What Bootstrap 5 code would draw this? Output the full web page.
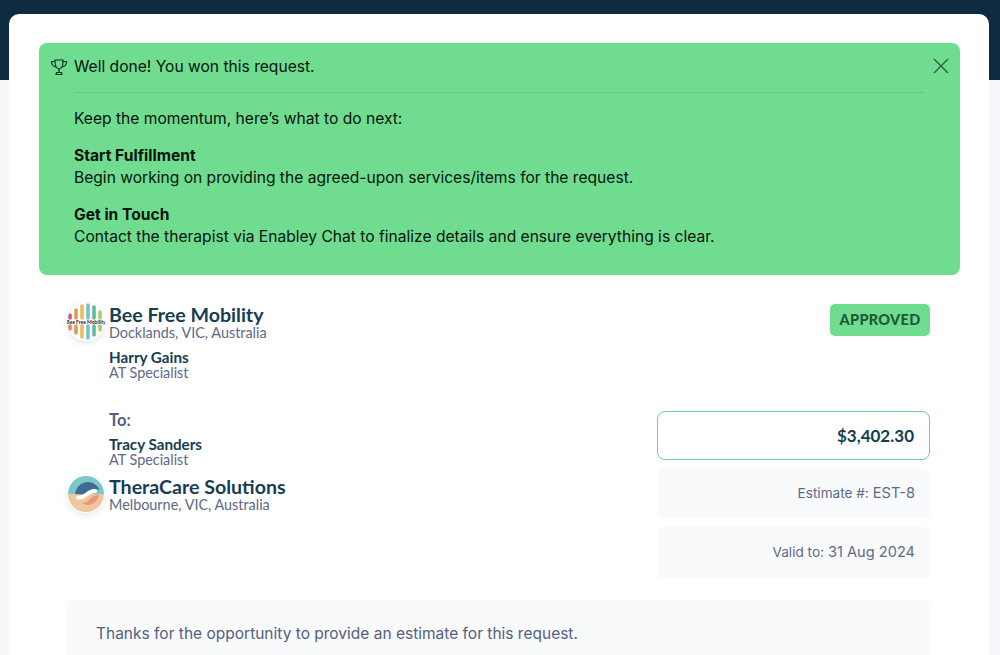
<!DOCTYPE html>
<html lang="en">
<head>
    <meta charset="UTF-8">
    <meta name="viewport" content="width=device-width, initial-scale=1.0">
    <title>Estimate - Enabley</title>
    <link href="https://cdn.jsdelivr.net/npm/bootstrap@5.3.0/dist/css/bootstrap.min.css" rel="stylesheet">
    <style>
        html, body { height: 655px; overflow: hidden; }
        body {
            font-family: "Inter", "Liberation Sans", sans-serif;
            background-color: #f5f7fb;
            color: #54607f;
        }

        .top-band { height: 80px; background-color: #0f2b41; }

        .sheet {
            margin: -66px 11px 0 9px;
            padding: 29px 29px 0 30px;
            background-color: #fff;
            border-radius: 10px 10px 0 0;
            height: 641px;
            overflow: hidden;
        }

        /* Won alert */
        .won-alert {
            background-color: #6fdc90;
            color: #06140b;
            border-radius: 8px;
            height: 232px;
            padding: 13px 35px 0 11px;
            font-size: 15.6px;
            line-height: 21px;
        }
        .won-copy { padding-left: 24px; }
        .won-rule { height: 1px; background-color: #63cc82; margin: 15px 0 15px; }
        .won-alert p { margin-bottom: 17px; }
        .won-alert strong { display: block; font-weight: 700; margin: -1px 0 1px; }
        .won-close { margin-right: -24px; margin-bottom: 2px; }

        /* Estimate head */
        .estimate-body { padding: 29px 30px 0 28px; }
        .party-logo {
            width: 38px;
            height: 38px;
            flex-shrink: 0;
            border-radius: 50%;
            box-shadow: 0 2px 6px rgba(60, 80, 110, .14);
        }
        .party-col { width: 300px; }
        .person-block { padding-left: 42px; }
        .brand-name {
            font-family: "Lato", "Liberation Sans", sans-serif;
            font-size: 19.6px;
            font-weight: 700;
            line-height: 21px;
            color: #163d52;
        }
        .brand-place, .person-role { font-family: "Lato", sans-serif; font-size: 14.4px; line-height: 16px; color: #5d6a88; }
        .person-name { font-family: "Lato", sans-serif; font-size: 15.2px; font-weight: 700; line-height: 16px; color: #163d52; }
        .to-label { font-family: "Lato", sans-serif; font-size: 16.5px; font-weight: 700; line-height: 20px; color: #54607f; margin-top: 29px; }
        .to-person { margin-top: 6px; }
        .thera-row { margin-top: 7px; }
        .bee-row { margin-top: -1px; }
        .harry-name { margin-top: 8px; }

        .status-tag {
            width: 100px;
            height: 32px;
            background-color: #6fdc90;
            color: #1d5a38;
            border-radius: 5px;
            font-family: "Lato", sans-serif;
            font-size: 14.5px;
            font-weight: 900;
            letter-spacing: .3px;
        }
        .info-col { width: 273px; }
        .amount-box {
            height: 49px;
            margin-top: 75px;
            border: 1px solid #6fc4c4;
            border-radius: 8px;
            padding-right: 15px;
            font-family: "Lato", sans-serif;
            font-size: 17px;
            font-weight: 700;
            color: #163d52;
        }
        .info-box {
            height: 51px;
            margin-top: 8px;
            background-color: #f8fafc;
            border-radius: 6px;
            padding-right: 15px;
            font-size: 13.6px;
            color: #5d6a88;
        }
        .info-box b { font-weight: 400; font-size: 14.6px; }
        .note-box {
            height: 90px;
            margin-top: 22px;
            padding: 23px 29px;
            background-color: #f8fafc;
            border-radius: 6px;
            font-size: 15.5px;
            line-height: 21px;
            color: #54607f;
        }
    </style>
</head>
<body>
    <div class="top-band"></div>

    <div class="sheet">
        <div class="won-alert">
            <div class="d-flex align-items-center" style="gap:6px">
                <svg width="18" height="18" viewBox="0 0 18 18" fill="none" stroke="#0e2a1b" stroke-width="1.1">
                    <path d="M5 2h8c0 4 0 8-4 9C5 10 5 6 5 2z"/>
                    <path d="M5 3.500H1.500c0 3 1.500 5 4.500 5.500M13 3.500h3.500c0 3-1.500 5-4.500 5.500"/>
                    <path d="M9 11v3M6.500 14.500h5l.5 2H6z"/>
                </svg>
                <span class="flex-grow-1">Well done! You won this request.</span>
                <svg class="won-close" width="16" height="16" viewBox="0 0 16 16" stroke="#2c6a45" stroke-width="1.500" fill="none">
                    <path d="M1 1l14 14M15 1L1 15"/>
                </svg>
            </div>
            <div class="won-copy">
                <div class="won-rule"></div>
                <p>Keep the momentum, here’s what to do next:</p>
                <p><strong>Start Fulfillment</strong>Begin working on providing the agreed-upon services/items for the request.</p>
                <p class="mb-0"><strong>Get in Touch</strong>Contact the therapist via Enabley Chat to finalize details and ensure everything is clear.</p>
            </div>
        </div>

        <div class="estimate-body">
            <div class="d-flex justify-content-between">
                <div class="party-col">
                    <div class="d-flex align-items-center gap-1 bee-row">
                        <svg class="party-logo" viewBox="0 0 38 38">
                            <g stroke-width="3.600" stroke-linecap="round">
                                <path stroke="#d9566a" d="M3 12v3"/>
                                <path stroke="#e8836a" d="M3 23v3"/>
                                <path stroke="#e39a58" d="M9 7v8M9 23v7"/>
                                <path stroke="#e8bd5a" d="M15 3v12M15 23v11"/>
                                <path stroke="#7cc0d0" d="M21 2v13M21 23v12"/>
                                <path stroke="#5fb9a8" d="M27 4v11M27 23v9"/>
                                <path stroke="#a5cf6c" d="M33 9v6M33 23v4"/>
                            </g>
                            <text x="19" y="20.700" text-anchor="middle" font-family="Lato, sans-serif" font-size="5" font-weight="700" fill="#222">Bee Free Mobility</text>
                        </svg>
                        <div>
                            <div class="brand-name">Bee Free Mobility</div>
                            <div class="brand-place">Docklands, VIC, Australia</div>
                        </div>
                    </div>
                    <div class="person-block">
                        <div class="person-name harry-name">Harry Gains</div>
                        <div class="person-role">AT Specialist</div>
                        <div class="to-label">To:</div>
                        <div class="person-name to-person">Tracy Sanders</div>
                        <div class="person-role">AT Specialist</div>
                    </div>
                    <div class="d-flex align-items-center gap-1 thera-row">
                        <svg class="party-logo" viewBox="0 0 38 38">
                            <path fill="#7cc7c9" d="M1 19a18 18 0 0 1 36 0z"/>
                            <path fill="#f0c79c" d="M1 19a18 18 0 0 0 36 0z"/>
                            <path fill="#3f6d92" d="M8 19C9 12 14 7 21 7c5 0 9 3 12 8-4-1-7 0-9 2-3 2-8 3-16 2z"/>
                            <path fill="#e8967f" d="M32 20c-1 6-6 10-11 10-2 0-4-1-6-2 3 0 6-2 9-5 2-2 5-3 8-3z"/>
                            <path fill="none" stroke="#fff" stroke-width="4" stroke-linecap="round" d="M11 22.500c3 .5 6-1 8.500-3s5-4 8.500-3.500"/>
                        </svg>
                        <div>
                            <div class="brand-name">TheraCare Solutions</div>
                            <div class="brand-place">Melbourne, VIC, Australia</div>
                        </div>
                    </div>
                </div>

                <div class="info-col d-flex flex-column align-items-end">
                    <div class="status-tag d-flex align-items-center justify-content-center">APPROVED</div>
                    <div class="amount-box w-100 d-flex align-items-center justify-content-end">$3,402.30</div>
                    <div class="info-box w-100 d-flex align-items-center justify-content-end gap-1">Estimate #: <b>EST-8</b></div>
                    <div class="info-box w-100 d-flex align-items-center justify-content-end gap-1">Valid to: <b>31 Aug 2024</b></div>
                </div>
            </div>

            <div class="note-box">Thanks for the opportunity to provide an estimate for this request.</div>
        </div>
    </div>

    <script src="https://cdn.jsdelivr.net/npm/bootstrap@5.3.0/dist/js/bootstrap.bundle.min.js"></script>
</body>
</html>
